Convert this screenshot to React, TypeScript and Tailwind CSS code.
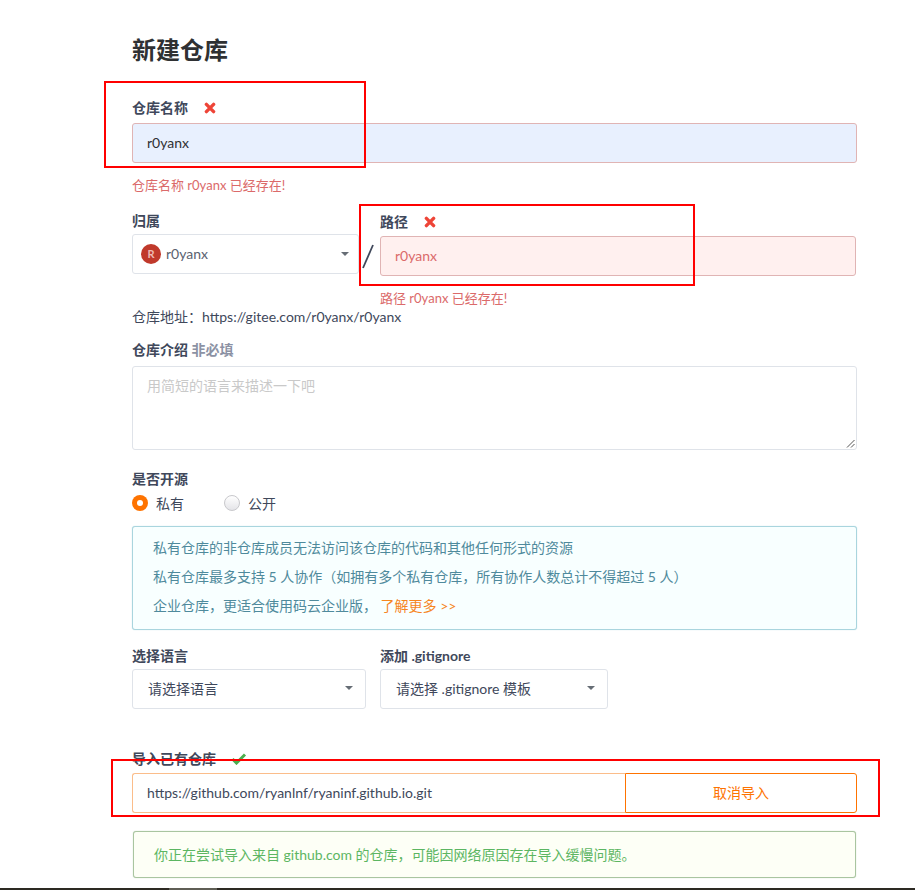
import React from 'react'

const font = '[font-family:Lato,"Noto_Sans_CJK_SC",sans-serif]'

function Cross() {
  return (
    <svg width="12" height="12" viewBox="0 0 12 12" className="text-[#ee4437]">
      <path d="M2.4 2.4 L9.6 9.6 M9.6 2.4 L2.4 9.6" stroke="currentColor" strokeWidth="3.4" strokeLinecap="round" fill="none" />
    </svg>
  )
}

function Check() {
  return (
    <svg width="16" height="12" viewBox="0 0 16 12" className="text-[#4cae4f]">
      <path d="M1.5 6 L5.5 10 L14 1.5" stroke="currentColor" strokeWidth="3" fill="none" />
    </svg>
  )
}

function Caret() {
  return <span className="w-0 h-0 border-x-[4px] border-x-transparent border-t-[4px] border-t-[#666d75]" />
}

function Label({ children, className = '' }: { children: React.ReactNode; className?: string }) {
  return <div className={`text-[14px] leading-[18px] font-bold text-[#40485b] ${className}`}>{children}</div>
}

function Select({ text, className = '' }: { text: string; className?: string }) {
  return (
    <div className={`h-10 border border-[#dfe3e9] rounded-[3px] bg-white flex items-center justify-between pl-[15px] pr-[12px] pb-[2px] text-[14px] text-[#40485b] ${className}`}>
      <span>{text}</span>
      <Caret />
    </div>
  )
}

export default function App() {
  return (
    <div className={`${font} relative w-[915px] h-[890px] overflow-hidden bg-white flex flex-col`}>
      <div className="pl-[132px] w-[857px] flex flex-col">
        <h1 className="mt-[36px] text-[24px] leading-[28px] font-bold text-[#2f3133]">新建仓库</h1>

        <div className="mt-[35px] flex items-center gap-[16px] h-[18px]">
          <Label>仓库名称</Label>
          <Cross />
        </div>
        <div className="mt-[6px] h-10 bg-[#e8f0fe] border border-[#e0b4b4] rounded-[3px] flex items-center px-[14px] pb-[2px] text-[14px] text-[#2f3133]">r0yanx</div>
        <div className="mt-[13px] text-[13px] leading-[18px] text-[#db6a6a]">仓库名称 r0yanx 已经存在!</div>

        <div className="mt-[18px] flex">
          <div className="w-[227px]">
            <Label>归属</Label>
            <div className="mt-[4px] h-10 border border-[#dfe3e9] rounded-[3px] bg-white flex items-center justify-between pl-[8px] pr-[9px]">
              <div className="flex items-center gap-[5px] text-[14px] text-[#5a6270]">
                <span className="w-5 h-5 rounded-full bg-[#c0392b] text-[#eeb9b3] text-[11px] font-bold flex items-center justify-center">R</span>
                <span className="-mt-[2px]">r0yanx</span>
              </div>
              <Caret />
            </div>
          </div>
          <div className="w-[21px] flex justify-center pt-[28px]">
            <svg width="15" height="32" viewBox="0 0 15 32" className="text-[#40485b]">
              <path d="M11 5 L1 28" stroke="currentColor" strokeWidth="1.8" fill="none" />
            </svg>
          </div>
          <div className="w-[476px]">
            <div className="flex items-center gap-[16px] h-[18px] mt-[1px]">
              <Label>路径</Label>
              <Cross />
            </div>
            <div className="mt-[5px] h-10 bg-[#fff0ef] border border-[#e0b4b4] rounded-[3px] flex items-center px-[14px] pb-[2px] text-[14px] text-[#db6a6a]">r0yanx</div>
            <div className="mt-[13px] text-[13px] leading-[18px] text-[#db6a6a]">路径 r0yanx 已经存在!</div>
          </div>
        </div>

        <div className="mt-[1px] text-[14px] leading-[18px] text-[#40485b]">仓库地址：https://gitee.com/r0yanx/r0yanx</div>

        <Label className="mt-[15px]">
          仓库介绍 <span className="text-[#8c92a4]">非必填</span>
        </Label>
        <div className="relative mt-[7px] h-[84px] border border-[#dfe3e9] rounded-[3px] px-[14px] py-[10px] text-[14px] leading-[18px] text-[#c9c9c9]">
          用简短的语言来描述一下吧
          <svg width="9" height="9" viewBox="0 0 9 9" className="absolute right-[1px] bottom-[1px] text-[#555]">
            <path d="M8.5 1 L1 8.5 M8.5 5 L5 8.5" stroke="currentColor" strokeWidth="1" fill="none" />
          </svg>
        </div>

        <Label className="mt-[20px]">是否开源</Label>
        <div className="mt-[6px] h-[18px] flex items-center text-[14px] text-[#40485b]">
          <span className="w-4 h-4 rounded-full bg-[#fe7300] flex items-center justify-center">
            <span className="w-[6px] h-[6px] rounded-full bg-white" />
          </span>
          <span className="ml-2 w-[68px]">私有</span>
          <span className="w-4 h-4 rounded-full border border-[#c8c8cc] bg-[linear-gradient(#fff,#e4e4e8)]" />
          <span className="ml-2">公开</span>
        </div>

        <div className="mt-[14px] h-[104px] bg-[#f8ffff] border border-[#a9d5de] rounded-[3px] shadow-[0_0_1px_#a9d5de] px-[20px] pt-[12px] text-[14px] leading-[18px] text-[#4f8a9c] flex flex-col gap-[11px]">
          <div>私有仓库的非仓库成员无法访问该仓库的代码和其他任何形式的资源</div>
          <div>私有仓库最多支持 5 人协作（如拥有多个私有仓库，所有协作人数总计不得超过 5 人）</div>
          <div>
            企业仓库，更适合使用码云企业版， <span className="text-[#f6861f]">了解更多 &gt;&gt;</span>
          </div>
        </div>

        <div className="mt-[17px] flex gap-[14px]">
          <div className="w-[234px]">
            <Label>选择语言</Label>
            <Select text="请选择语言" className="mt-[4px]" />
          </div>
          <div className="w-[228px]">
            <Label>添加 .gitignore</Label>
            <Select text="请选择 .gitignore 模板" className="mt-[4px]" />
          </div>
        </div>

        <div className="mt-[41px] flex items-center gap-[15px] h-[18px]">
          <Label>导入已有仓库</Label>
          <Check />
        </div>
        <div className="mt-[5px] h-10 flex">
          <div className="flex-1 border border-r-0 border-[#fbbd8a] rounded-l-[3px] flex items-center px-[14px] pb-[2px] text-[14px] text-[#40485b]">https://github.com/ryanlnf/ryaninf.github.io.git</div>
          <div className="w-[232px] border border-[#fe7300] rounded-r-[3px] flex items-center justify-center pb-[2px] text-[14px] text-[#fe7300]">取消导入</div>
        </div>

        <div className="mt-[18px] ml-[1px] mr-[1px] h-[47px] bg-[#fdfff6] border border-[#a9c5a0] rounded-[3px] shadow-[0_0_1px_#a9c5a0] flex items-center px-[20px] text-[14px] text-[#5cb662]">
          你正在尝试导入来自 github.com 的仓库，可能因网络原因存在导入缓慢问题。
        </div>
      </div>

      <div className="mt-auto h-[2px] bg-[#2d2a23] flex">
        <div className="ml-[169px] w-[48px] bg-[#5f5e55]" />
      </div>

      {/* red annotation frames drawn over the form */}
      <div className="absolute left-[104px] top-[81px] w-[262px] h-[87px] border-2 border-[#ff0000]" />
      <div className="absolute left-[359px] top-[204px] w-[336px] h-[82px] border-2 border-[#ff0000]" />
      <div className="absolute left-[111px] top-[759px] w-[769px] h-[58px] border-2 border-[#ff0000]" />
    </div>
  )
}
